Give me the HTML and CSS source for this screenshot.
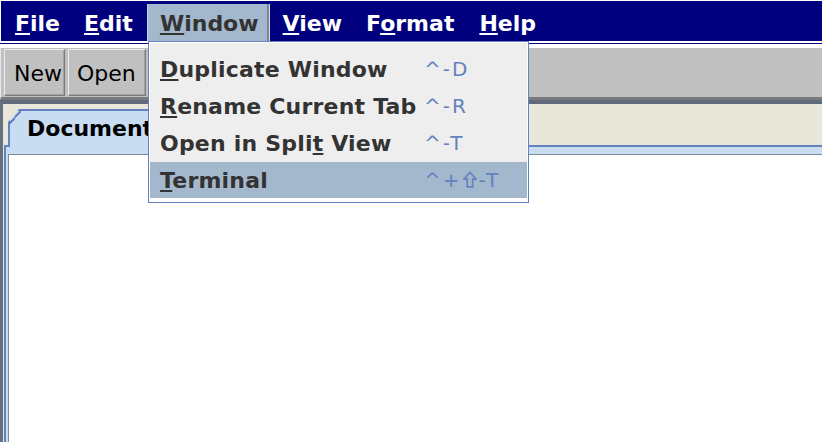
FILE: index.html
```html
<!DOCTYPE html>
<html>
<head>
<meta charset="utf-8">
<title>Editor</title>
<link rel="stylesheet" href="styles.css">
</head>
<body>
<div class="app">
  <nav class="menubar">
    <span class="mb-item"><u>F</u>ile</span>
    <span class="mb-item"><u>E</u>dit</span>
    <span class="mb-item active"><u>W</u>indow</span>
    <span class="mb-item"><u>V</u>iew</span>
    <span class="mb-item">F<u>o</u>rmat</span>
    <span class="mb-item"><u>H</u>elp</span>
  </nav>
  <div class="sep"></div>
  <div class="toolbar">
    <button class="btn btn-new">New</button>
    <button class="btn btn-open">Open</button>
  </div>
  <div class="tabs">
    <div class="tab-strip">
      <div class="tab">Document</div>
    </div>
    <div class="frame">
      <div class="doc"></div>
    </div>
  </div>

  <div class="menu">
    <div class="menu-list">
      <div class="mi"><span class="mi-label"><u>D</u>uplicate Window</span><span class="mi-key">^-D</span></div>
      <div class="mi"><span class="mi-label"><u>R</u>ename Current Tab</span><span class="mi-key">^-R</span></div>
      <div class="mi"><span class="mi-label">Open in Spli<u>t</u> View</span><span class="mi-key">^-T</span></div>
      <div class="mi selected"><span class="mi-label"><u>T</u>erminal</span><span class="mi-key">^+<svg class="shift" viewBox="0 0 14 17" width="14" height="17" aria-label="Shift"><path d="M7 1.3 L13 8.2 H9.7 V15.8 H4.3 V8.2 H1 Z" fill="none" stroke="currentColor" stroke-width="1.7" stroke-linejoin="miter"/></svg>-T</span></div>
    </div>
  </div>
</div>
</body>
</html>
```
FILE: styles.css
```css
html, body {
  margin: 0;
  padding: 0;
  background: #ffffff;
}

body {
  width: 822px;
  height: 442px;
  overflow: hidden;
  font-family: "DejaVu Sans", "Noto Sans", sans-serif;
}

.app {
  position: relative;
  width: 822px;
  height: 442px;
  display: flex;
  flex-direction: column;
}

/* ---------- menubar ---------- */
.menubar {
  box-sizing: border-box;
  height: 41px;
  background: #00007f;
  border-top: 1px solid #ffffff;
  border-left: 1px solid #ffffff;
  padding: 3px 0 0 2px;
  display: flex;
  flex: none;
}

.mb-item {
  box-sizing: border-box;
  height: 37px;
  padding: 2px 12px 0;
  line-height: 35px;
  font-size: 22px;
  font-weight: bold;
  color: #ffffff;
  white-space: nowrap;
}

.mb-item:nth-child(3) { margin-left: 2px; }
.mb-item:nth-child(4) { margin-left: 1px; }
.mb-item:nth-child(6) { margin-left: 1px; }

.mb-item u,
.mi u {
  text-decoration-thickness: 2px;
  text-underline-offset: 2px;
}

.mb-item.active {
  background: #a3b8cc;
  color: #333333;
  border-left: 1px solid #c8d4e0;
  box-shadow: inset -1px 0 0 #d6dee8, inset -3px 0 0 #7c8694;
  padding-right: 11px;
}

.sep {
  flex: none;
  height: 1px;
  background: #00007f;
  margin: 2px 0 4px;
}

/* ---------- toolbar ---------- */
.toolbar {
  flex: none;
  box-sizing: content-box;
  height: 48px;
  padding: 1px 0 0 3px;
  background: #c0c0c0;
  border-left: 1px solid #e8e8e8;
  border-bottom: 3px solid #7a7a7a;
  display: flex;
  align-items: flex-start;
}

.btn {
  box-sizing: border-box;
  height: 47px;
  margin: 0 3px 0 0;
  padding: 3px 8px 0;
  line-height: 42px;
  text-align: left;
  font-family: "DejaVu Sans", sans-serif;
  font-size: 22px;
  color: #000000;
  background: #c0c0c0;
  border: 1px solid;
  border-color: #ececec #7a7a7a #7a7a7a #ececec;
  box-shadow: inset -1px -1px 0 #a2a2a2;
}

.btn-new { width: 61px; padding-left: 9px; }
.btn-open { width: 78px; }

/* ---------- tabbed pane ---------- */
.tabs {
  flex: 1;
  display: flex;
  flex-direction: column;
  background: #e9e7da;
  border-top: 4px solid #5f6b7c;
  border-left: 3px solid #66717f;
}

.tab-strip {
  flex: none;
  box-sizing: border-box;
  height: 41px;
  padding-left: 5px;
  display: flex;
  align-items: flex-end;
}

.tab {
  position: relative;
  z-index: 1;
  box-sizing: border-box;
  height: 38px;
  margin-bottom: -2px;
  padding: 0 18px 0 17px;
  line-height: 36px;
  font-size: 22px;
  font-weight: bold;
  color: #000000;
  background: #c8ddf2;
  border-top: 2px solid #6382bf;
  border-left: 2px solid #6382bf;
  border-right: 2px solid #6382bf;
  clip-path: polygon(11px 0, 100% 0, 100% 100%, 0 100%, 0 13px);
}

.tab::before {
  content: "";
  position: absolute;
  top: -2px;
  left: -2px;
  width: 13px;
  height: 15px;
  background: linear-gradient(to bottom right, transparent 50%, #6382bf 50%, #6382bf calc(50% + 2px), transparent calc(50% + 2px));
}

.frame {
  flex: 1;
  display: flex;
  margin-left: 1px;
  padding: 7px 0 0 2px;
  background: #c8ddf2;
  border-top: 2px solid #6382bf;
  border-left: 2px solid #6382bf;
}

.doc {
  flex: 1;
  background: #ffffff;
  border-top: 1px solid #7a8a99;
  border-left: 1px solid #7a8a99;
}

/* ---------- popup menu ---------- */
.menu {
  position: absolute;
  left: 148px;
  top: 41px;
  z-index: 5;
  box-sizing: border-box;
  width: 381px;
  border: 1px solid #6382bf;
  padding: 1px 1px 4px;
  background: #ffffff;
}

.menu-list {
  background: #eeeeee;
  padding-top: 8px;
}

.mi {
  display: grid;
  grid-template-columns: 264px 1fr;
  height: 37px;
  padding-left: 10px;
  line-height: 37px;
  white-space: nowrap;
}

.mi.selected {
  background: #a3b8cc;
  height: 36px;
}

.mi-label {
  font-size: 22px;
  font-weight: bold;
  color: #333333;
  letter-spacing: 0.2px;
}

.mi-key {
  font-size: 20px;
  color: #6382bf;
  letter-spacing: 2px;
}

.shift {
  display: inline-block;
  vertical-align: -1px;
  margin: 0 2px 0 1px;
  color: #6382bf;
}
```
